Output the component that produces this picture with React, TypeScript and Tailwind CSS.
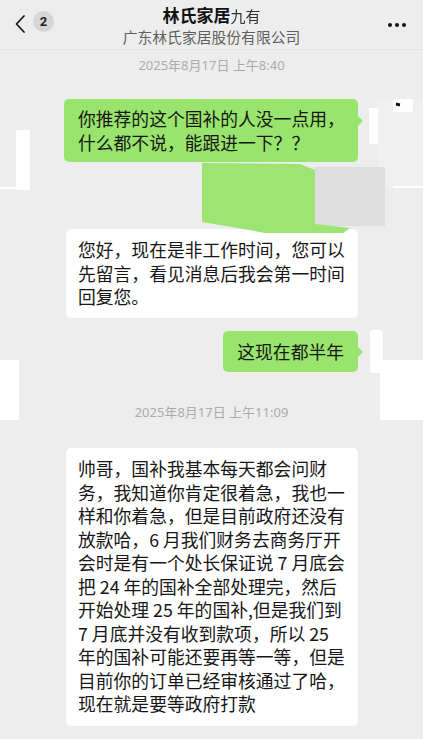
import React from "react";

const GREEN = "bg-[#98e46c]";

function Tail({ top }: { top: number }) {
  return (
    <div
      className={`absolute right-[-3px] w-[10px] h-[10px] rotate-45 rounded-[1px] ${GREEN}`}
      style={{ top }}
    />
  );
}

const longMsg = [
  "帅哥，国补我基本每天都会问财",
  "务，我知道你肯定很着急，我也一",
  "样和你着急，但是目前政府还没有",
  "放款哈，6 月我们财务去商务厅开",
  "会时是有一个处长保证说 7 月底会",
  "把 24 年的国补全部处理完，然后",
  "开始处理 25 年的国补,但是我们到",
  "7 月底并没有收到款项，所以 25",
  "年的国补可能还要再等一等，但是",
  "目前你的订单已经审核通过了哈，",
  "现在就是要等政府打款",
];

export default function App() {
  return (
    <div className="relative w-[423px] h-[739px] overflow-hidden bg-[#ededed] text-[#161616] font-['Noto_Sans_CJK_SC','Noto_Sans',sans-serif]">
      {/* Header */}
      <div className="relative h-[50px] border-b border-[#e4e4e4] flex items-start">
        <div className="absolute left-[14px] top-[14px] flex items-center gap-[7px]">
          <svg width="12" height="20" viewBox="0 0 12 20" fill="none">
            <path d="M10 2 L2.5 10 L10 18" stroke="#1a1a1a" strokeWidth="1.8" strokeLinecap="round" strokeLinejoin="round" />
          </svg>
          <div className="w-[21px] h-[21px] -mt-[5px] rounded-full bg-[#d6d6d6] flex items-center justify-center text-[13px] font-bold text-[#222] font-['Roboto',sans-serif]">
            2
          </div>
        </div>
        <div className="flex-1 flex flex-col items-center pt-[4px]">
          <div className="text-[17px] leading-[22px] font-bold text-[#111]">
            林氏家居<span className="text-[15px] font-normal blur-[0.6px] text-[#333]">九有</span>
          </div>
          <div className="text-[14.8px] leading-[20px] text-[#5f5f5f]">广东林氏家居股份有限公司</div>
        </div>
        <div className="absolute right-[17px] top-[23px] flex gap-[3px]">
          <div className="w-[4px] h-[4px] rounded-full bg-[#111]" />
          <div className="w-[4px] h-[4px] rounded-full bg-[#111]" />
          <div className="w-[4px] h-[4px] rounded-full bg-[#111]" />
        </div>
      </div>

      {/* Messages */}
      <div className="flex flex-col">
        <div className="mt-[6px] text-center text-[13px] leading-[18px] text-[#ababab] font-['Noto_Sans','Noto_Sans_CJK_SC',sans-serif]">
          2025年8月17日 上午8:40
        </div>

        <div className="mt-[25px] flex justify-end pr-[65px]">
          <div className={`relative w-[294px] rounded-[5px] ${GREEN} pl-[14px] pr-[10px] py-[8px] text-[17.8px] leading-[23.5px]`}>
            <Tail top={17} />
            <div className="relative whitespace-nowrap">你推荐的这个国补的人没一点用，</div>
            <div className="relative whitespace-nowrap">什么都不说，能跟进一下？？</div>
          </div>
        </div>

        <div className="mt-[67px] flex justify-start pl-[66px]">
          <div className="relative w-[292px] rounded-[5px] bg-white pl-[12px] pr-[10px] py-[9px] text-[17.8px] leading-[23.5px]">
            <div className="whitespace-nowrap">您好，现在是非工作时间，您可以</div>
            <div className="whitespace-nowrap">先留言，看见消息后我会第一时间</div>
            <div className="whitespace-nowrap">回复您。</div>
          </div>
        </div>

        <div className="mt-[13px] flex justify-end pr-[65px]">
          <div className={`relative rounded-[5px] ${GREEN} pl-[14px] pr-[14px] py-[9px] text-[17.8px] leading-[23.5px]`}>
            <Tail top={16} />
            <div className="relative whitespace-nowrap">这现在都半年</div>
          </div>
        </div>

        <div className="mt-[31px] text-center text-[13px] leading-[18px] text-[#ababab] font-['Noto_Sans','Noto_Sans_CJK_SC',sans-serif]">
          2025年8月17日 上午11:09
        </div>

        <div className="mt-[27px] flex justify-start pl-[66px]">
          <div className="relative w-[292px] rounded-[5px] bg-white pl-[12px] pr-[10px] pt-[9px] pb-[10px] text-[17.8px] leading-[23.5px]">
            {longMsg.map((l, i) => (
              <div key={i} className="whitespace-nowrap">
                {l}
              </div>
            ))}
          </div>
        </div>
      </div>

      {/* Redaction patches over avatars / content */}
      <div className="absolute left-[16px] top-[130px] w-[14px] h-[60px] bg-white" />
      <div className="absolute left-0 top-[187px] w-[30px] h-[2px] bg-white" />
      <div className="absolute left-[378px] top-[100px] w-[45px] h-[88px] bg-[#f0f0f0]" />
      <div className="absolute left-[369px] top-[108px] w-[9px] h-[36px] bg-white" />
      <div className="absolute left-[393px] top-[99px] w-[20px] h-[13px] bg-white">
        <div className="absolute left-[3px] top-[4px] w-[4px] h-[3px] bg-[#111] rotate-12" />
      </div>
      <div className="absolute left-[393px] top-[186px] w-[30px] h-[2px] bg-white" />
      <div className="absolute left-[315px] top-[167px] w-[70px] h-[59px] bg-[#dedede]" />
      <svg className="absolute left-0 top-0" width="423" height="739" viewBox="0 0 423 739">
        <polygon
          points="202,163 300,164 315,170 315,224 350,228 343,233 265,233 232,227 202,222"
          fill="#9de472"
        />
      </svg>
      <div className="absolute left-[370px] top-[330px] w-[13px] h-[43px] rounded-[3px] bg-white" />
      <div className="absolute left-0 top-[360px] w-[19px] h-[60px] bg-white" />
      <div className="absolute left-[380px] top-[360px] w-[43px] h-[60px] bg-white" />
    </div>
  );
}
